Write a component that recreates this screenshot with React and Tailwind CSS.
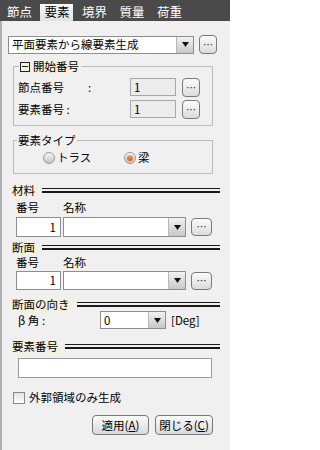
const FONT = { fontFamily: '"Noto Sans CJK JP", "Noto Sans", sans-serif' }

function DotsButton({ w = 18, h = 19 }) {
  return (
    <button
      className={`flex shrink-0 items-end justify-center rounded-[4px] border border-[#7a7a7a] bg-gradient-to-b from-[#fbfbfb] to-[#dcdcdc] pb-[3px] text-[10px] leading-none text-[#222] ${w === 21 ? 'w-[21px]' : 'w-[18px]'} ${h === 18 ? 'h-[18px]' : 'h-[19px]'}`}
    >
      …
    </button>
  )
}

function Combo({ value, className }) {
  return (
    <div className={`flex items-stretch border border-[#8e8e8e] bg-white ${className}`}>
      <div className="flex flex-1 items-center truncate pl-[3px] text-[11.5px] text-black">{value}</div>
      <div className="flex w-[17px] items-center justify-center border-l border-[#b8b8b8] bg-gradient-to-b from-[#f2f2f2] to-[#c8c8c8]">
        <svg width="7" height="5" viewBox="0 0 7 5"><path d="M0 0h7L3.5 5z" fill="#111" /></svg>
      </div>
    </div>
  )
}

function Heading({ label, className }) {
  return (
    <div className={`flex h-[13px] items-center pl-[4px] ${className}`}>
      <span className="bg-[#f3f0e2] pr-[3px] text-[11.5px] leading-[13px] text-black">{label}</span>
      <div className="ml-[4px] mr-[10px] h-[5px] flex-1 border-t-[1.5px] border-b-2 border-[#1a1a1a]" />
    </div>
  )
}

function Radio({ checked, label }) {
  return (
    <div className="flex items-center gap-[2px]">
      <span className="flex h-[12px] w-[12px] items-center justify-center rounded-full border border-[#9a9a9a] bg-gradient-to-b from-[#f7f7f7] to-[#c4c4c4]">
        {checked && <span className="h-[6px] w-[6px] rounded-full bg-gradient-to-b from-[#ffa060] to-[#e0501a]" />}
      </span>
      <span className="text-[11.5px]">{label}</span>
    </div>
  )
}

function NumberRow() {
  return (
    <div className="flex h-full items-center pl-[8px]">
      <div className="flex h-full w-[45px] items-center justify-end border border-[#8e8e8e] bg-white pr-[4px] text-[11.5px]">1</div>
      <Combo className="ml-[2px] h-full w-[123px]" />
      <div className="ml-[5px]"><DotsButton w={21} h={18} /></div>
    </div>
  )
}

export default function App() {
  const tabs = ['節点', '要素', '境界', '質量', '荷重']
  return (
    <div className="flex h-[450px] w-[230px] flex-col bg-[#4a4a4a] leading-[15px] text-black" style={FONT}>
      <div className="flex h-[21px] items-end gap-[4.5px] pl-[2px]">
        {tabs.map((t, i) => (
          <div
            key={t}
            className={`flex h-[17px] w-[33px] items-center pl-[5px] text-[12.5px] leading-none ${i === 1 ? 'bg-gradient-to-b from-[#f7f7f7] to-[#dde5e1] text-black' : 'text-white'}`}
          >
            {t}
          </div>
        ))}
      </div>
      <div className="flex-1 border-l-2 border-[#b0b0b0] bg-[#f0f0f0] pl-[6px] pt-[14px]">
        <div className="flex h-[19px] items-center gap-[5px]">
          <Combo value="平面要素から線要素生成" className="h-[18px] w-[186px]" />
          <DotsButton />
        </div>

        <div className="relative ml-[5px] mt-[12px] w-[200px] border border-[#bcbcbc] pb-[7px] pl-[4px] pt-[11px]">
          <div className="absolute -top-[8px] left-[5px] flex h-[15px] items-center gap-[3px] bg-[#f3f0e2] pl-[1px] pr-[2px] text-[11.5px]">
            <span className="flex h-[10px] w-[10px] items-center justify-center border border-[#222]">
              <span className="h-px w-[6px] bg-[#222]" />
            </span>
            開始番号
          </div>
          <div className="flex h-[18px] items-center">
            <span className="w-[70px] text-[11.5px]">節点番号</span>
            <span className="w-[42px] text-[11.5px]">:</span>
            <div className="flex h-[18px] w-[46px] items-center border border-[#a8a8a8] bg-[#ececec] pl-[3px] text-[11.5px]">1</div>
            <div className="ml-[6px]"><DotsButton /></div>
          </div>
          <div className="mt-[4px] flex h-[18px] items-center">
            <span className="w-[112px] text-[11.5px]">要素番号 :</span>
            <div className="flex h-[18px] w-[46px] items-center border border-[#a8a8a8] bg-[#ececec] pl-[3px] text-[11.5px]">1</div>
            <div className="ml-[6px]"><DotsButton /></div>
          </div>
        </div>

        <div className="relative ml-[5px] mt-[14px] h-[34px] w-[200px] border border-[#bcbcbc]">
          <div className="absolute -top-[8px] left-[3px] bg-[#f0f0f0] px-[1px] text-[11.5px]">要素タイプ</div>
          <div className="flex h-full items-center pl-[29px] pt-[1px]">
            <div className="w-[81px]"><Radio label="トラス" /></div>
            <Radio checked label="梁" />
          </div>
        </div>

        <Heading label="材料" className="mt-[10px]" />
        <div className="mt-[3px] flex pl-[8px] text-[11.5px]">
          <span className="w-[47px]">番号</span><span>名称</span>
        </div>
        <div className="mt-[2px] h-[20px]"><NumberRow /></div>

        <Heading label="断面" className="mt-[4px]" />
        <div className="mt-[1px] flex pl-[8px] text-[11.5px]">
          <span className="w-[47px]">番号</span><span>名称</span>
        </div>
        <div className="mt-[1px] h-[19px]"><NumberRow /></div>

        <Heading label="断面の向き" className="mt-[8px]" />
        <div className="flex h-[18px] items-center pl-[10px] text-[11.5px]">
          <span className="w-[82px]">β 角 :</span>
          <Combo value="0" className="h-[18px] w-[66px]" />
          <span className="ml-[5px]">[Deg]</span>
        </div>

        <Heading label="要素番号" className="mt-[11px]" />
        <div className="ml-[10px] mt-[5px] h-[20px] w-[194px] border border-[#9a9a9a] bg-white" />

        <div className="mt-[12px] flex h-[15px] items-center gap-[4px] pl-[5px]">
          <span className="h-[12px] w-[12px] border border-[#8a8a8a] bg-gradient-to-b from-[#e2e2e2] to-white" />
          <span className="text-[11.5px]">外郭領域のみ生成</span>
        </div>

        <div className="mt-[10px] flex w-[205px] justify-end gap-[6px]">
          <button className="h-[20px] w-[57px] rounded-[4px] border border-[#777] bg-gradient-to-b from-[#fbfbfb] to-[#dadada] text-[11.5px]">適用(<span className="underline">A</span>)</button>
          <button className="h-[20px] w-[58px] rounded-[4px] border border-[#777] bg-gradient-to-b from-[#fbfbfb] to-[#dadada] text-[11.5px]">閉じる(<span className="underline">C</span>)</button>
        </div>
      </div>
    </div>
  )
}
